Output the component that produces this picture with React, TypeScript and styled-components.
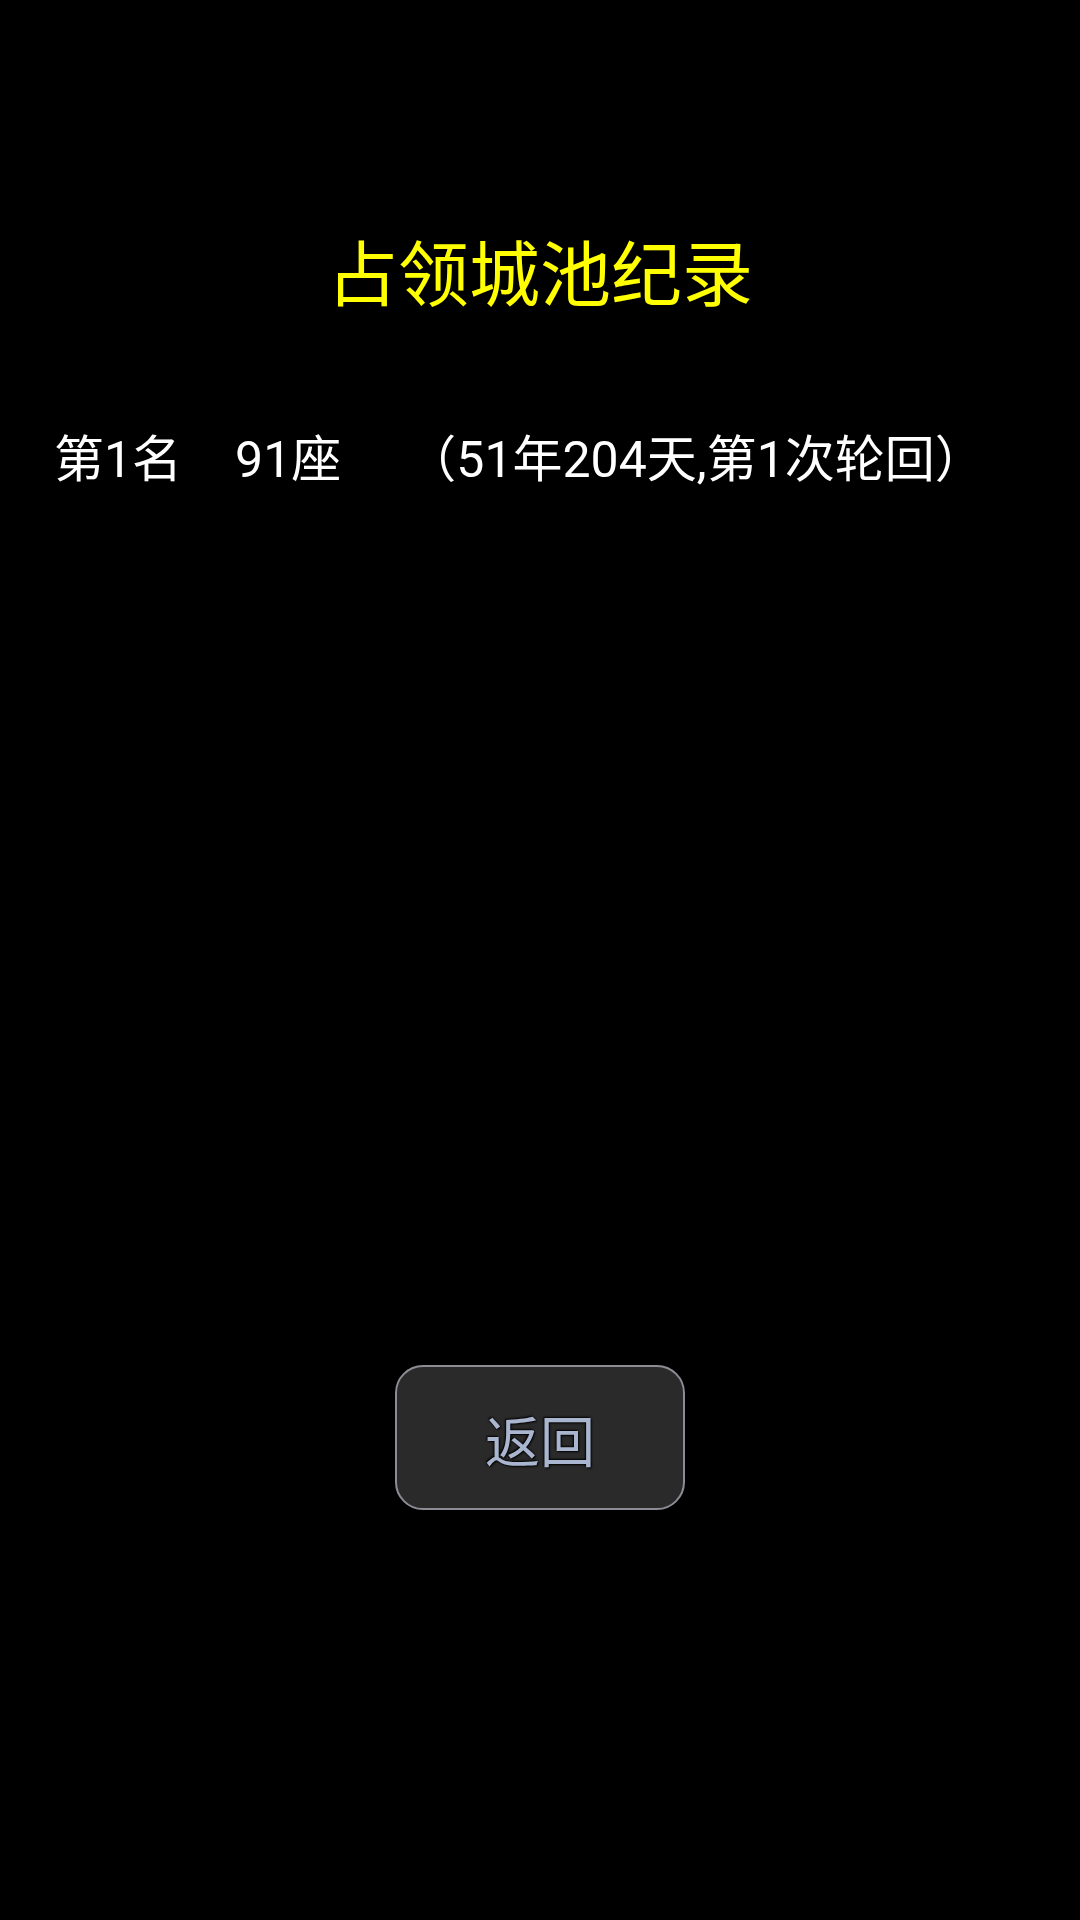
import React from 'react';
import styled, { createGlobalStyle } from 'styled-components';

const GlobalStyle = createGlobalStyle`
  html, body {
    margin: 0;
    padding: 0;
    background: #000;
  }
  body {
    font-family: Roboto, "Noto Sans CJK SC", sans-serif;
  }
`;

// Full-screen black page
const Screen = styled.div`
  width: 1080px;
  height: 1920px;
  background: #000;
  display: flex;
  flex-direction: column;
  align-items: center;
  overflow: hidden;
`;

const Title = styled.h1`
  margin: 234px 0 0;
  font-family: "Noto Sans CJK SC", sans-serif;
  font-weight: 400;
  font-size: 71px;
  line-height: 71px;
  color: #ffff00;
  text-align: center;
`;

// Record list area, fills space above the back button
const RecordList = styled.div`
  align-self: stretch;
  height: 1060px;
  padding: 130px 0 0 54px;
  box-sizing: border-box;
  display: flex;
  flex-direction: column;
  gap: 20px;
`;

// one line of text, cells are inline so the full-width bracket keeps its width
const RecordRow = styled.div`
  font-family: Roboto, "Noto Sans CJK SC", sans-serif;
  font-size: 50px;
  line-height: 50px;
  color: #fff;
  white-space: nowrap;
`;

const Cell = styled.span<{ $gap?: number }>`
  display: inline;
  margin-right: ${p => p.$gap ?? 0}px;
`;

const BackButton = styled.button`
  width: 290px;
  height: 145px;
  border-radius: 28px;
  border: 2px solid #8c8c94;
  background: #2a2a2a;
  color: #aab6cf;
  font-family: "Noto Sans CJK SC", sans-serif;
  font-size: 55px;
  text-shadow: 1px 1px 2px #000, -1px -1px 2px #000;
  cursor: pointer;
`;

interface CityRecord {
  rank: number;
  cities: number;
  detail: string;
}

const records: CityRecord[] = [
  { rank: 1, cities: 91, detail: '（51年204天,第1次轮回）' },
];

const App: React.FC = () => (
  <>
    <GlobalStyle />
    <Screen>
      <Title>占领城池纪录</Title>
      <RecordList>
        {records.map(r => (
          <RecordRow key={r.rank}>
            <Cell $gap={53}>第{r.rank}名</Cell>
            <Cell $gap={65}>{r.cities}座</Cell>
            <Cell>{r.detail}</Cell>
          </RecordRow>
        ))}
      </RecordList>
      <BackButton>返回</BackButton>
    </Screen>
  </>
);

export default App;
